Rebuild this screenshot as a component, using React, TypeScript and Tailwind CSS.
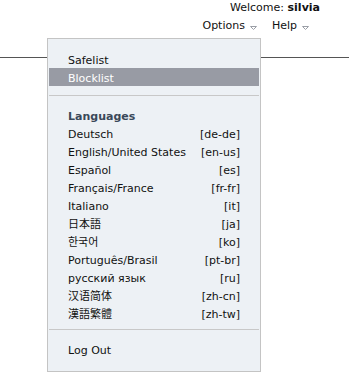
import React from "react";

const languages = [
  ["Deutsch", "[de-de]"],
  ["English/United States", "[en-us]"],
  ["Español", "[es]"],
  ["Français/France", "[fr-fr]"],
  ["Italiano", "[it]"],
  ["日本語", "[ja]"],
  ["한국어", "[ko]"],
  ["Português/Brasil", "[pt-br]"],
  ["русский язык", "[ru]"],
  ["汉语简体", "[zh-cn]"],
  ["漢語繁體", "[zh-tw]"],
];

const Caret = () => (
  <svg width="7" height="6" viewBox="0 0 7 6" className="ml-[5px] mt-[4px]">
    <path d="M0.5 1.5 H6.5 L3.5 4.5 Z" fill="none" stroke="#9a9ea6" strokeWidth="1" />
  </svg>
);

export default function App() {
  return (
    <div
      className="relative w-[349px] h-[391px] bg-white text-[11px] text-[#111]"
      style={{ fontFamily: '"DejaVu Sans", Verdana, "Noto Sans CJK JP", "Noto Sans CJK KR", sans-serif' }}
    >
      <div className="flex flex-col items-end pr-[29px]">
        <div className="h-[15px] leading-[16px]">
          Welcome: <span className="font-bold">silvia</span>
        </div>
        <div className="flex items-center h-[18px] mt-[2px] mr-[11px] gap-[15px]">
          <div className="flex items-center">
            Options <Caret />
          </div>
          <div className="flex items-center">
            Help <Caret />
          </div>
        </div>
      </div>
      <div className="mt-[22px] h-px bg-[#555]" />

      <div className="absolute left-[47px] top-[38px] w-[214px] h-[334px] bg-[#edf1f5] border border-[#c4c4c4] px-px pt-[11px]">
        <div className="h-[18px] leading-[22px] pl-[19px]">Safelist</div>
        <div className="h-[18px] leading-[22px] pl-[19px] bg-[#989ba4] text-white">Blocklist</div>
        <div className="mt-[9px] h-px bg-[#c8c8c8]" />
        <div className="mt-[10px] px-[19px]">
          <div className="h-[18px] leading-[22px] font-bold text-[#3a4859]">Languages</div>
          {languages.map(([name, code]) => (
            <div key={code} className="flex justify-between h-[18px] leading-[22px]">
              <span>{name}</span>
              <span>{code}</span>
            </div>
          ))}
        </div>
        <div className="mt-[7px] h-px bg-[#c8c8c8]" />
        <div className="mt-[10px] h-[18px] leading-[22px] pl-[19px]">Log Out</div>
      </div>
    </div>
  );
}
